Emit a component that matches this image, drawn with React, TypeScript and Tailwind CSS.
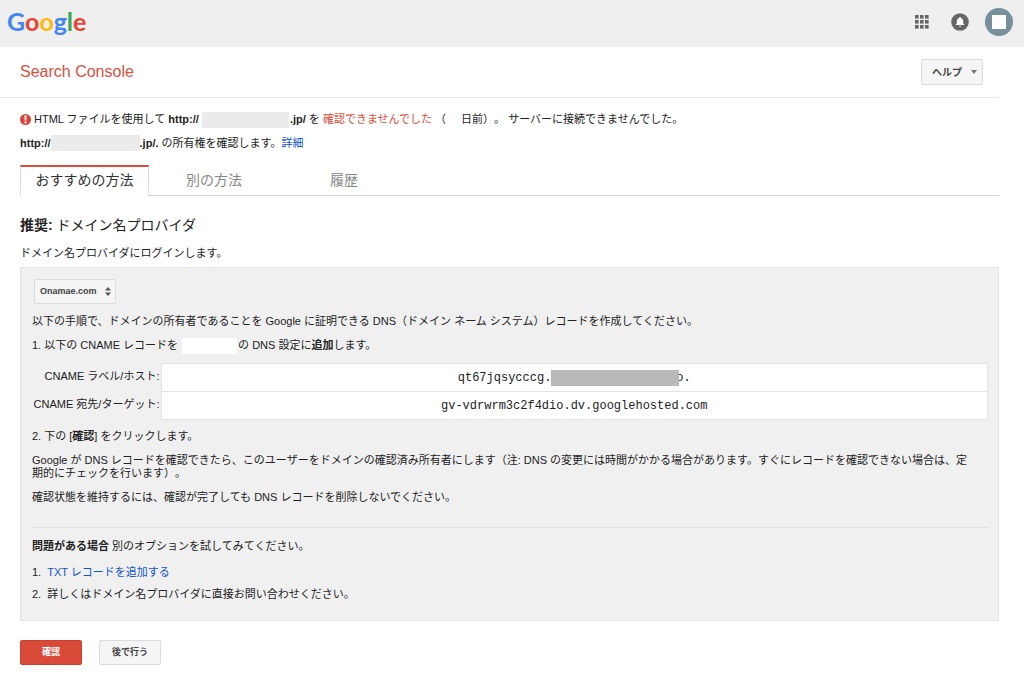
import { useState } from "react";
import type { ReactNode } from "react";

const tabs = ["おすすめの方法", "別の方法", "履歴"];

const GoogleLogo = () => (
  <a
    href="#"
    className="pb-[2px] font-[Lato,sans-serif] text-[25px] leading-[34px] font-bold"
  >
    <span className="text-[#4285f4]">G</span>
    <span className="text-[#ea4335]">o</span>
    <span className="text-[#fbbc05]">o</span>
    <span className="text-[#4285f4]">g</span>
    <span className="text-[#34a853]">l</span>
    <span className="text-[#ea4335]">e</span>
  </a>
);

const AppsIcon = () => (
  <svg width="14" height="14" viewBox="0 0 14 14" fill="#666">
    {[0, 5, 10].map((y) =>
      [0, 5, 10].map((x) => (
        <rect key={`${x}-${y}`} x={x} y={y} width="3.600" height="3.600" />
      ))
    )}
  </svg>
);

const BellIcon = () => (
  <svg width="18" height="18" viewBox="0 0 18 18">
    <circle cx="9" cy="9" r="8.800" fill="#666" />
    <path
      d="M9 3.900c.5 0 .9.4.9.8v.3c1.500.4 2.300 1.700 2.300 3.200v2.300l1 1v.6H4.800v-.6l1-1V8.200c0-1.500.8-2.800 2.300-3.200v-.3c0-.4.4-.8.9-.8zM7.900 12.700h2.200a1.100 1.100 0 0 1-2.200 0z"
      fill="#fff"
    />
  </svg>
);

const ErrorIcon = () => (
  <svg width="11" height="11" viewBox="0 0 11 11" className="shrink-0">
    <circle cx="5.500" cy="5.500" r="5.500" fill="#db4437" />
    <path d="M4.400 1.500h2.200l-.3 5H4.700z" fill="#fff" />
    <circle cx="5.500" cy="8.400" r="1.100" fill="#fff" />
  </svg>
);

const Redacted = ({ className }: { className: string }) => (
  <span className={`inline-block align-middle ${className}`} />
);

const RecordRow = ({
  label,
  children,
}: {
  label: string;
  children: ReactNode;
}) => (
  <tr>
    <th
      scope="row"
      className="w-[129px] pr-px pb-[2px] text-right font-normal whitespace-nowrap"
    >
      {label}
    </th>
    <td className="h-7 border border-[#e2e2e2] bg-white text-center font-['Liberation_Mono','Noto_Sans_CJK_JP',monospace] text-xs">
      {children}
    </td>
  </tr>
);

const App = () => {
  const [activeTab, setActiveTab] = useState(0);

  return (
    <div className="min-h-screen bg-white font-['Liberation_Sans','Noto_Sans_CJK_JP',sans-serif] text-[11px] leading-[13px] text-[#222] [text-spacing-trim:space-all]">
      <header className="flex h-[47px] items-center justify-between bg-[#efefef] pr-[11px] pb-1 pl-[7px]">
        <GoogleLogo />
        <div className="flex items-center">
          <button aria-label="Apps" className="mr-[22px]">
            <AppsIcon />
          </button>
          <button aria-label="Notifications" className="mr-4">
            <BellIcon />
          </button>
          <button
            aria-label="Account"
            className="flex size-7 items-center justify-center rounded-full bg-[#78909c]"
          >
            <span className="size-[14px] bg-white" />
          </button>
        </div>
      </header>

      <div className="mr-[25px] flex h-[51px] items-center justify-between border-b border-[#e8e8e8] pr-4 pl-5">
        <h1 className="text-base text-[#d94f40]">Search Console</h1>
        <button className="flex h-[26px] w-[62px] items-center justify-between rounded-xs border border-[#dcdcdc] bg-[#f5f5f5] pr-[5px] pl-[10px] text-[10px] font-bold text-[#444]">
          ヘルプ
          <svg width="6" height="4" viewBox="0 0 6 4" fill="#777">
            <path d="M0 0h6L3 4z" />
          </svg>
        </button>
      </div>

      <main className="pt-[13px] pr-[25px] pb-[10px] pl-5">
        <p className="flex items-center leading-4 whitespace-pre">
          <ErrorIcon />
          <span className="ml-[3px]">
            HTML ファイルを使用して <b>http://</b>
            <Redacted className="mr-px ml-[3px] h-4 w-[87px] bg-[#ebebeb]" />
            <b>.jp/</b> を{" "}
            <span className="text-[#dd4b39]">確認できませんでした</span>
            {" （"}
            <span className="ml-[15px]">日前）。 サーバーに接続できませんでした。</span>
          </span>
        </p>
        <p className="mt-[7px] flex items-center leading-4 whitespace-pre">
          <b>http://</b>
          <Redacted className="h-4 w-[89px] bg-[#ebebeb]" />
          <b>.jp/.</b> の所有権を確認します。
          <a href="#" className="text-[#15c]">
            詳細
          </a>
        </p>

        <nav className="mt-[14px] flex border-b border-[#d5d5d5] text-sm">
          {tabs.map((tab, i) => (
            <button
              key={tab}
              onClick={() => setActiveTab(i)}
              className={
                i === activeTab
                  ? "-mb-px h-[31px] w-[129px] border-x border-t-2 border-x-[#ddd] border-t-[#dd4b39] bg-white pb-[4px] text-[#333]"
                  : "h-[30px] w-[130px] pb-px text-[#888]"
              }
            >
              {tab}
            </button>
          ))}
        </nav>

        <h2 className="mt-[19px] text-sm leading-5">
          <b>推奨:</b> ドメイン名プロバイダ
        </h2>
        <p className="mt-[10px] leading-4">
          ドメイン名プロバイダにログインします。
        </p>

        <section className="mt-[6px] border border-[#e3e3e3] bg-[#f0f0f0] pt-[11px] pr-[10px] pb-[18px] pl-[11px]">
          <div className="relative ml-[2px] w-[82px]">
            <select
              aria-label="ドメイン名プロバイダ"
              className="block h-[25px] w-full appearance-none rounded-xs border border-[#dcdcdc] bg-[#f5f5f5] pl-[5px] text-[9px] font-bold text-[#444]"
            >
              <option>Onamae.com</option>
            </select>
            <svg
              width="6"
              height="9"
              viewBox="0 0 6 9"
              fill="#555"
              className="pointer-events-none absolute top-2 right-[5px]"
            >
              <path d="M0 3.500L3 0l3 3.500zM0 5.500h6L3 9z" />
            </svg>
          </div>

          <p className="mt-[11px]">
            以下の手順で、ドメインの所有者であることを Google に証明できる
            DNS（ドメイン ネーム システム）レコードを作成してください。
          </p>
          <p className="mt-[11px]">
            1. 以下の CNAME レコードを
            <Redacted className="-my-1 mr-px ml-1 h-4 w-[55px] bg-white" />
            の DNS 設定に<b>追加</b>します。
          </p>

          <table className="mt-[11px] w-full border-collapse">
            <tbody>
              <RecordRow label="CNAME ラベル/ホスト:">
                qt67jqsycccg.
                <Redacted className="relative -mr-[3px] h-4 w-[128px] bg-[#b9b9b9]" />
                o.
              </RecordRow>
              <RecordRow label="CNAME 宛先/ターゲット:">
                gv-vdrwrm3c2f4dio.dv.googlehosted.com
              </RecordRow>
            </tbody>
          </table>

          <p className="mt-[10px]">
            2. 下の [<b>確認</b>] をクリックします。
          </p>
          <p className="mt-[11px] pr-3">
            Google が DNS
            レコードを確認できたら、このユーザーをドメインの確認済み所有者にします（注:
            DNS
            の変更には時間がかかる場合があります。すぐにレコードを確認できない場合は、定期的にチェックを行います）。
          </p>
          <p className="mt-[11px]">
            確認状態を維持するには、確認が完了しても DNS
            レコードを削除しないでください。
          </p>

          <hr className="mt-[23px] border-[#e0e0e0]" />

          <p className="mt-3">
            <b>問題がある場合</b> 別のオプションを試してみてください。
          </p>
          <ol className="mt-[11px] flex flex-col gap-[6px] leading-4">
            <li className="flex gap-[6px]">
              <span>1.</span>
              <a href="#" className="text-[#15c]">
                TXT レコードを追加する
              </a>
            </li>
            <li className="flex gap-[6px]">
              <span>2.</span>
              <span>
                詳しくはドメイン名プロバイダに直接お問い合わせください。
              </span>
            </li>
          </ol>
        </section>

        <div className="mt-[19px] flex gap-[17px] text-[9px] font-bold">
          <button className="h-[25px] w-[62px] rounded-xs border border-[#c8402f] bg-[#d94a38] text-white">
            確認
          </button>
          <button className="h-[25px] w-[62px] rounded-xs border border-[#dcdcdc] bg-[#f5f5f5] text-[#444]">
            後で行う
          </button>
        </div>
      </main>
    </div>
  );
};

export default App;
